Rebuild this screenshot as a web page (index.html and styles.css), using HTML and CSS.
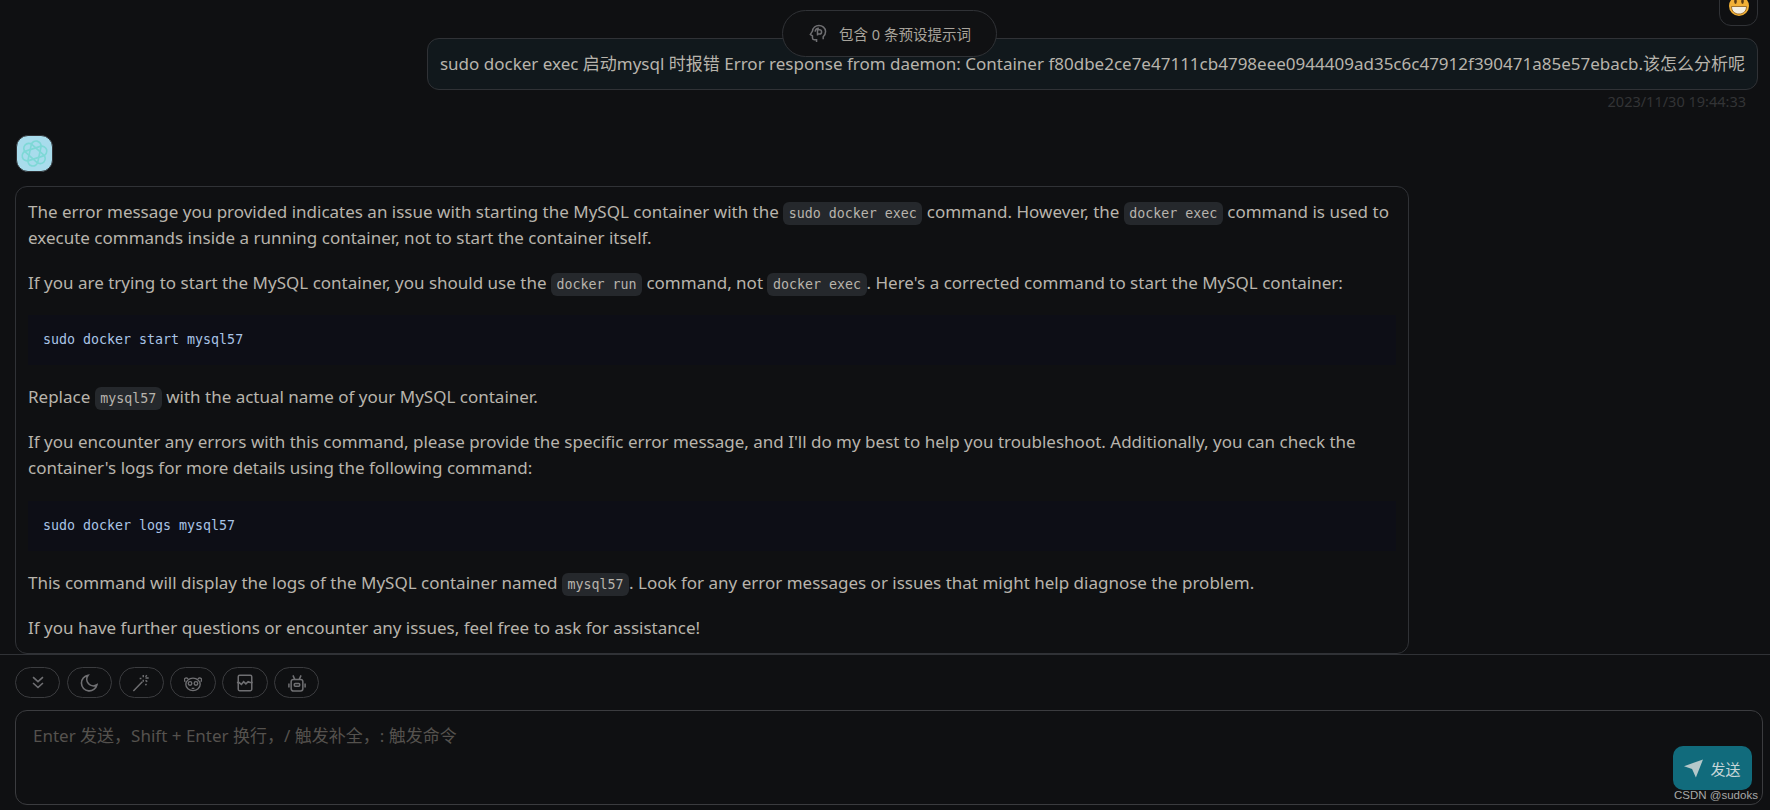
FILE: index.html
```html
<!DOCTYPE html>
<html lang="zh-CN">
<head>
    <meta charset="UTF-8">
    <title>Chat</title>
    <link rel="stylesheet" href="styles.css">
</head>
<body>
    <div class="chat">
        <div class="prompt-pill">
            <svg class="pill-icon" viewBox="0 0 20 20" fill="none" stroke="currentColor" stroke-width="1.600">
                <path d="M9 19v-2.500H6.500a1.800 1.800 0 0 1-1.800-1.800v-2.200L2.500 11l2.200-3.500C5 4 8 1.500 11.500 1.500S18.500 4 18.500 8c0 3-1.500 4.500-2.500 5.500V16"/>
                <path d="M10 12V6h2a2.300 2.300 0 0 1 0 4.600h-2"/>
                <path d="M7.500 8a4 4 0 0 1 4-3.500"/>
            </svg>
            <span>包含 0 条预设提示词</span>
        </div>
        <div class="messages">
            <div class="msg msg-user">
                <div class="avatar avatar-emoji">
                    <svg class="emoji-face" viewBox="0 0 20 20">
                        <circle cx="10" cy="10" r="10" fill="#f2b035"/>
                        <ellipse cx="6.500" cy="5.500" rx="1.300" ry="2.400" fill="#5b3a12"/>
                        <ellipse cx="13.500" cy="5.500" rx="1.300" ry="2.400" fill="#5b3a12"/>
                        <path d="M2.500 10.500h15c0 5-3.500 7.500-7.500 7.500s-7.500-2.500-7.500-7.500z" fill="#f4efe2" stroke="#8a5a18" stroke-width=".8"/>
                    </svg>
                </div>
                <div class="bubble bubble-user">sudo docker exec 启动mysql 时报错 Error response from daemon: Container f80dbe2ce7e47111cb4798eee0944409ad35c6c47912f390471a85e57ebacb.该怎么分析呢</div>
                <div class="msg-time">2023/11/30 19:44:33</div>
            </div>
            <div class="msg msg-bot">
                <div class="avatar avatar-bot">
                    <svg viewBox="0 0 32 32" fill="none" stroke="#7ed8d6" stroke-width="1.800">
                        <rect x="10.500" y="2" width="11" height="28" rx="5.500" transform="rotate(12 16 16)"/>
                        <rect x="10.500" y="2" width="11" height="28" rx="5.500" transform="rotate(72 16 16)"/>
                        <rect x="10.500" y="2" width="11" height="28" rx="5.500" transform="rotate(132 16 16)"/>
                    </svg>
                </div>
                <div class="bubble bubble-bot">
                    <p>The error message you provided indicates an issue with starting the MySQL container with the <code>sudo docker exec</code> command. However, the <code>docker exec</code> command is used to execute commands inside a running container, not to start the container itself.</p>
                    <p>If you are trying to start the MySQL container, you should use the <code>docker run</code> command, not <code>docker exec</code>. Here's a corrected command to start the MySQL container:</p>
                    <pre>sudo docker start mysql57</pre>
                    <p>Replace <code>mysql57</code> with the actual name of your MySQL container.</p>
                    <p>If you encounter any errors with this command, please provide the specific error message, and I'll do my best to help you troubleshoot. Additionally, you can check the container's logs for more details using the following command:</p>
                    <pre>sudo docker logs mysql57</pre>
                    <p>This command will display the logs of the MySQL container named <code>mysql57</code>. Look for any error messages or issues that might help diagnose the problem.</p>
                    <p>If you have further questions or encounter any issues, feel free to ask for assistance!</p>
                </div>
            </div>
        </div>
        <div class="input-panel">
            <div class="actions">
                <button class="action">
                    <svg viewBox="0 0 20 20" fill="none" stroke="currentColor" stroke-width="1.800"><path d="M4.500 3.500 10 8.500l5.500-5M4.500 10 10 15l5.500-5"/></svg>
                </button>
                <button class="action">
                    <svg viewBox="0 0 20 20" fill="none" stroke="currentColor" stroke-width="1.800"><path d="M9 1.500a8.700 8.700 0 1 0 9.800 10.500A7.300 7.300 0 0 1 9 1.500z"/></svg>
                </button>
                <button class="action">
                    <svg viewBox="0 0 20 20" fill="none" stroke="currentColor" stroke-width="1.600"><path d="M1.500 19 11.500 8.500M12.500 1v2.500M12.500 6.500v2M8.500 5h2M15 4.500h3.500M16.500 1.500 15 3M17 8.500l-2-1.500M15 11l1 1.500"/></svg>
                </button>
                <button class="action">
                    <svg viewBox="0 0 20 20" fill="none" stroke="currentColor" stroke-width="1.500">
                        <ellipse cx="10" cy="11.500" rx="8" ry="7"/>
                        <path d="M4.500 5.500a2.200 2.200 0 1 0-3 3M15.500 5.500a2.200 2.200 0 1 1 3 3M8.500 16h3"/>
                        <circle cx="6.700" cy="10.500" r="2"/>
                        <circle cx="13.300" cy="10.500" r="2"/>
                    </svg>
                </button>
                <button class="action">
                    <svg viewBox="0 0 20 20" fill="none" stroke="currentColor" stroke-width="1.700"><rect x="2.500" y="1.500" width="15" height="17" rx="1.500"/><path d="M1 9.500h2.500l2.500 2 2.500-3 2.500 2.500 2.500-2.500 2 1h3"/></svg>
                </button>
                <button class="action">
                    <svg viewBox="0 0 20 20" fill="none" stroke="currentColor" stroke-width="1.700"><rect x="3.500" y="6" width="13" height="13" rx="2.500"/><rect x="7" y="10.500" width="6" height="3" rx="1"/><path d="M7.500 6 5.500 1.500M12.500 6l2-4.500M1 10.500v4.500M19 10.500v4.500"/></svg>
                </button>
            </div>
            <div class="input-box">
                <div class="placeholder">Enter 发送，Shift + Enter 换行，/ 触发补全，: 触发命令</div>
                <button class="send">
                    <svg viewBox="0 0 20 20" fill="currentColor"><path d="M20 .5 0 7.500l8.500 3 4 9z"/></svg>
                    <span>发送</span>
                </button>
            </div>
        </div>
        <div class="watermark">CSDN @sudoks</div>
    </div>
</body>
</html>
```

FILE: styles.css
```css
* {
    box-sizing: border-box;
}
html, body {
    height: 100%;
}
body {
    margin: 0;
    background-color: #0f1012;
    color: #b8b4ac;
    font-family: "Noto Sans", "Noto Sans CJK SC", sans-serif;
    font-size: 17px;
    overflow: hidden;
}
.chat {
    position: relative;
    height: 810px;
    display: flex;
    flex-direction: column;
}

/* top pill */
.prompt-pill {
    position: absolute;
    top: 10px;
    left: 782px;
    width: 215px;
    height: 47px;
    display: flex;
    align-items: center;
    justify-content: center;
    gap: 12px;
    background-color: #101113;
    border: 1px solid #303236;
    border-radius: 24px;
    font-size: 14.500px;
    color: #a8a49c;
}
.pill-icon {
    width: 19px;
    height: 19px;
    color: #6f6f72;
}

/* messages */
.messages {
    height: 654px;
    padding: 0 7px 0 15px;
    overflow: hidden;
    display: flex;
    flex-direction: column;
    justify-content: flex-end;
    flex-shrink: 0;
}
.msg {
    display: flex;
    flex-direction: column;
}
.msg-user {
    align-items: flex-end;
    padding-right: 5px;
    margin-bottom: 24px;
}
.msg-bot {
    align-items: flex-start;
}
.avatar {
    border-radius: 12px;
    border: 1px solid #303236;
    display: flex;
    align-items: center;
    justify-content: center;
}
.avatar-emoji {
    flex-shrink: 0;
    width: 39px;
    height: 39px;
    margin-bottom: 12px;
}
.emoji-face {
    width: 20px;
    height: 20px;
}
.avatar-bot {
    width: 37px;
    height: 37px;
    margin: 0 0 14px 1px;
    background-color: #a8dcec;
}
.avatar-bot svg {
    width: 29px;
    height: 29px;
}
.bubble {
    border: 1px solid #303236;
    border-radius: 12px;
    padding: 12px;
    line-height: 26px;
}
.bubble-user {
    background-color: #11181c;
}
.bubble-bot {
    width: 1394px;
}
.bubble-bot p {
    margin: 0 0 19.200px;
}
.bubble-bot p:last-child {
    margin-bottom: 0;
}
.bubble-bot code {
    font-family: "DejaVu Sans Mono", monospace;
    font-size: 13.300px;
    line-height: 1;
    background-color: #25282c;
    border-radius: 6px;
    padding: 4px 5.500px;
}
.bubble-bot pre {
    margin: 0 0 19.200px;
    height: 50px;
    padding: 12px 15px;
    background-color: #0d0e16;
    color: #a9c4e6;
    font-family: "DejaVu Sans Mono", monospace;
    font-size: 13.300px;
    line-height: 26px;
}
.msg-time {
    margin-top: 1px;
    padding-right: 12px;
    font-size: 14.500px;
    line-height: 20px;
    color: #333436;
}

/* input */
.input-panel {
    flex: 1;
    border-top: 1px solid #303236;
    padding: 12px 7px 5px 15px;
    display: flex;
    flex-direction: column;
    gap: 12px;
}
.actions {
    display: flex;
    gap: 6.400px;
}
.action {
    width: 45.400px;
    height: 31px;
    padding: 0;
    background: none;
    border: 1px solid #3b3c3f;
    border-radius: 16px;
    color: #6f6f72;
    display: flex;
    align-items: center;
    justify-content: center;
}
.action svg {
    width: 18px;
    height: 18px;
}
.input-box {
    position: relative;
    flex: 1;
    border: 1px solid #3b3c3f;
    border-radius: 12px;
    padding: 12px 17px;
    line-height: 26px;
}
.placeholder {
    color: #55524e;
}
.send {
    position: absolute;
    right: 10px;
    bottom: 14px;
    width: 79px;
    height: 44px;
    display: flex;
    align-items: center;
    justify-content: center;
    gap: 7px;
    border: none;
    border-radius: 10px;
    background-color: #116b7c;
    color: #c6d6d8;
    font-family: inherit;
    font-size: 15px;
}
.send svg {
    width: 19px;
    height: 19px;
    color: #b4c8ca;
}
.watermark {
    position: absolute;
    left: 1674px;
    top: 788px;
    font-family: "Liberation Sans", sans-serif;
    font-size: 11.500px;
    line-height: 14px;
    color: #a8a8a8;
}
```
